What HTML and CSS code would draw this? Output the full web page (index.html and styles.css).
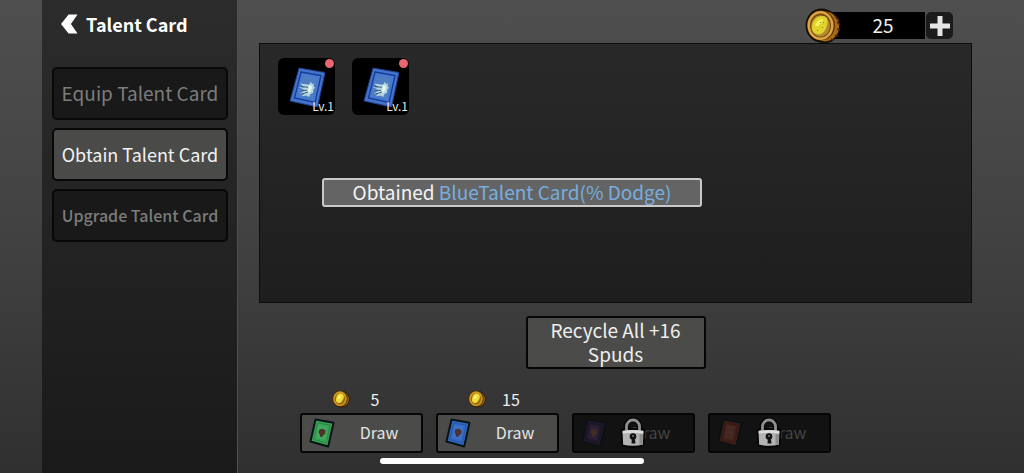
FILE: index.html
```html
<!DOCTYPE html>
<html lang="en">
<head>
<meta charset="utf-8">
<title>Talent Card</title>
<link rel="stylesheet" href="styles.css">
</head>
<body>
<svg class="defs" aria-hidden="true">
  <defs>
    <symbol id="coin" viewBox="0 0 36 36">
      <ellipse cx="20" cy="18.500" rx="15.500" ry="16.500" fill="#160d02"/>
      <ellipse cx="16.500" cy="17.500" rx="16" ry="17" fill="#160d02"/>
      <ellipse cx="20" cy="18.500" rx="14" ry="15" fill="#a86a16"/>
      <path d="M30 8l4 5M32 14l3 3M32 21l3 1M30 27l3 1M26 31l3 1" stroke="#4f2c06" stroke-width="1.500"/>
      <ellipse cx="16" cy="17.500" rx="14" ry="15" fill="#5b3307"/>
      <ellipse cx="15.500" cy="17.500" rx="13" ry="14.500" fill="#dda445"/>
      <ellipse cx="15.500" cy="17.500" rx="10.500" ry="12" fill="#76480c"/>
      <ellipse cx="15.500" cy="18" rx="9.500" ry="10.700" fill="#b08a34"/>
      <path d="M7 20c0-5 2-9 6-11 4-2 9-1 9.500 3 .5 5-2 12-6.500 14-4 1.500-9-1-9-6z" fill="#e0d42c"/>
      <path d="M10 18c1-4 4-7 8-7-1 4-4 8-8 7z" fill="#fbf05a"/>
      <path d="M12 22l1 1M17 19l1 1M15 14l1 1M18 14l1 1" stroke="#a2850f" stroke-width="1"/>
    </symbol>
    <symbol id="coin-small" viewBox="0 0 18 18">
      <ellipse cx="10" cy="9.300" rx="7.800" ry="8.300" fill="#2a1803"/>
      <ellipse cx="10.200" cy="9.300" rx="6.800" ry="7.300" fill="#94630f"/>
      <ellipse cx="8" cy="8.700" rx="7.600" ry="8.200" fill="#422806"/>
      <ellipse cx="8" cy="8.700" rx="6.800" ry="7.400" fill="#cf9a25"/>
      <ellipse cx="8" cy="8.800" rx="5.200" ry="5.800" fill="#9a6a10"/>
      <path d="M4 10c0-3 1-6 4-6.500 3-.4 4.500 2 3.500 5S8.500 13.500 6.500 13 4 11.500 4 10z" fill="#f0d83a"/>
      <path d="M5.500 9c.4-2 1.500-3.500 3.500-3.800C9.500 7 8 9.500 5.500 9z" fill="#fff47c"/>
    </symbol>
    <symbol id="card" viewBox="0 0 26 30">
      <path d="M6.500 1.500l18 3.200L19.200 28.500 1.500 23.500z" fill="currentColor" stroke="#0a1216" stroke-width="2" stroke-linejoin="round"/>
      <path d="M8.500 4.800l12.700 2.300L17.400 25 4.600 21.500z" fill="none" stroke="#000" stroke-opacity=".2" stroke-width="1"/>
      <path d="M9.500 7l9 1.600-2.800 13.600-8.500-2.200z" fill="#fff" fill-opacity=".06"/>
      <path d="M10.500 11.500l3-.8 3 1.800-.5 3.500-1.800 1-1 2-2.200-.6-.2-2.200-1.200-2z" fill="#4a302c"/>
      <path d="M12 13l2.500.4-.5 2.400-2.300-.5z" fill="#68302c"/>
    </symbol>
    <symbol id="talent" viewBox="0 0 36 42">
      <path d="M10 2l26 4.500L28.500 41 1 35z" fill="#4373cc" stroke="#203f86" stroke-width="1" stroke-linejoin="round"/>
      <path d="M12 6l20 3.500L26 36.500 5.500 32z" fill="#4679d2" stroke="#143c92" stroke-width="1.300"/>
      <path d="M14 9.500l14.500 2.300-4.800 21L8.500 29.500z" fill="#4f7dc2"/>
      <path d="M11 17.500l9 1.200 2-3 1 2.500 2-1-.5 3 1.500 1.500-1.800 2-.2 3-2.500 1.200-1.500 3-2.500-1.500-5 .8 3-2.600-5-.4 4.500-1.800-5.500-1.200 6-.6-6-2.400 6 .2z" fill="#b4d8de"/>
      <path d="M12 20.500l7 .8M11 24.800l7-.6M13 28l6-2" stroke="#314f78" stroke-width=".9"/>
      <path d="M20 19l3 1-1 5-3 2z" fill="#e6f7ec"/>
    </symbol>
    <symbol id="lock" viewBox="0 0 26 32">
      <path d="M6.500 15V9.500a6.500 6.500 0 0 1 13 0V15" fill="none" stroke="#080808" stroke-width="6"/>
      <path d="M1.500 13q11.500-2 23 0l-.7 15.500q-10.800 2.500-21.600 0z" fill="#b4b4b4" stroke="#080808" stroke-width="2"/>
      <path d="M6.500 14V9.500a6.500 6.500 0 0 1 13 0V14" fill="none" stroke="#8f8f8f" stroke-width="2.800"/>
      <path d="M2.700 14q10.300-1.800 20.600 0v2.500q-10.300-1.500-20.600 0z" fill="#dcdcdc"/>
      <path d="M19.500 17l3.500.3-.5 10-3 .6z" fill="#8c8c8c"/>
      <circle cx="13" cy="19.500" r="3.300" fill="#111"/>
      <path d="M12 20h2.500l1 6.500h-4z" fill="#111"/>
      <circle cx="13" cy="19" r="1" fill="#777"/>
    </symbol>
  </defs>
</svg>

<aside class="sidebar">
  <header class="heading">
    <button class="back" type="button" aria-label="Back">
      <svg viewBox="0 0 18 20"><path d="M8 0h9.500L10.500 10l7 10H8L0 10z" fill="#fff"/></svg>
    </button>
    <h1 class="title">Talent Card</h1>
  </header>
  <nav class="tabs">
    <button class="tab tab-large" type="button">Equip Talent Card</button>
    <button class="tab tab-active" type="button" aria-current="page">Obtain Talent Card</button>
    <button class="tab" type="button">Upgrade Talent Card</button>
  </nav>
</aside>

<main class="content">
  <div class="wallet">
    <svg class="wallet-coin"><use href="#coin"/></svg>
    <span class="balance">25</span>
    <button class="add" type="button" aria-label="Add coins">
      <svg viewBox="0 0 20 20"><path d="M7.500 0h5v7.500H20v5h-7.500V20h-5v-7.500H0v-5h7.500z" fill="#e4e4e4"/></svg>
    </button>
  </div>

  <section class="inventory" aria-label="Cards">
    <button class="slot" type="button">
      <svg class="slot-card"><use href="#talent"/></svg>
      <span class="dot"></span>
      <span class="level">Lv.1</span>
    </button>
    <button class="slot" type="button">
      <svg class="slot-card"><use href="#talent"/></svg>
      <span class="dot"></span>
      <span class="level">Lv.1</span>
    </button>
  </section>

  <button class="recycle" type="button">Recycle All +16 Spuds</button>

  <section class="draws" aria-label="Draw">
    <div class="draw-item">
      <div class="cost"><svg class="cost-coin"><use href="#coin-small"/></svg><span class="price">5</span></div>
      <button class="draw green" type="button"><svg class="draw-card"><use href="#card"/></svg><span class="draw-label">Draw</span></button>
    </div>
    <div class="draw-item">
      <div class="cost"><svg class="cost-coin"><use href="#coin-small"/></svg><span class="price">15</span></div>
      <button class="draw blue" type="button"><svg class="draw-card"><use href="#card"/></svg><span class="draw-label">Draw</span></button>
    </div>
    <div class="draw-item">
      <button class="draw locked purple" type="button" disabled><svg class="draw-card"><use href="#card"/></svg><span class="draw-label">Draw</span><svg class="lock"><use href="#lock"/></svg></button>
    </div>
    <div class="draw-item">
      <button class="draw locked red" type="button" disabled><svg class="draw-card"><use href="#card"/></svg><span class="draw-label">Draw</span><svg class="lock"><use href="#lock"/></svg></button>
    </div>
  </section>
</main>

<div class="toast" role="status">Obtained <span class="toast-name">BlueTalent Card(% Dodge)</span></div>
<div class="home-bar"></div>
</body>
</html>
```
FILE: styles.css
```css
* {
  box-sizing: border-box;
}

body {
  position: relative;
  display: flex;
  min-height: 100vh;
  margin: 0;
  padding: 0 52px 0 42px;
  background: linear-gradient(#4f4f4f, #434343 45%, #303030);
  color: #eee;
  font-family: "Noto Sans CJK SC", "Noto Sans", sans-serif;
  font-weight: 400;
}

button {
  margin: 0;
  padding: 0;
  border: 0;
  background: none;
  color: inherit;
  font: inherit;
}

svg {
  display: block;
}

.defs {
  position: absolute;
  width: 0;
  height: 0;
}

.sidebar {
  flex: 0 0 196px;
  padding: 10px 9px 0 10px;
  border-right: 1px solid #505050;
  background: linear-gradient(#2c2c2c, #1a1a1a);
}

.heading {
  display: flex;
  align-items: center;
  gap: 8px;
  height: 28px;
  margin-bottom: 29px;
  padding-left: 9px;
}

.back svg {
  width: 17px;
  height: 20px;
}

.title {
  margin: 0;
  color: #fff;
  font-size: 18px;
  font-weight: 700;
  line-height: 26px;
}

.tabs {
  display: flex;
  flex-direction: column;
  gap: 8px;
}

.tab {
  height: 53px;
  padding-bottom: 2px;
  border: 2px solid #080808;
  border-radius: 5px;
  background: #191919;
  color: #7c7c7c;
  font-size: 16px;
  font-weight: 500;
  white-space: nowrap;
}

.tab-large {
  font-size: 19px;
  font-weight: 400;
}

.tab-active {
  background: #4a4a48;
  color: #f2f2f2;
  font-size: 18px;
  font-weight: 400;
}

.content {
  display: flex;
  flex: 1;
  flex-direction: column;
  padding: 8px 0 20px 21px;
}

.wallet {
  display: flex;
  align-items: center;
  align-self: flex-end;
  height: 35px;
  margin-right: 19px;
}

.wallet-coin {
  z-index: 1;
  width: 36px;
  height: 36px;
  margin-right: -12px;
}

.balance {
  width: 96px;
  height: 27px;
  padding-left: 12px;
  background: #000;
  font-size: 19px;
  line-height: 26px;
  text-align: center;
}

.add {
  display: grid;
  place-items: center;
  width: 27px;
  height: 27px;
  margin-left: 1px;
  border-radius: 5px;
  background: #1b1b1b;
}

.add svg {
  width: 20px;
  height: 20px;
}

.inventory {
  display: flex;
  align-items: flex-start;
  gap: 17px;
  height: 260px;
  padding: 14px 18px;
  border: 1px solid #0d0d0d;
  background: linear-gradient(#292929, #1e1e1e);
}

.slot {
  position: relative;
  display: grid;
  place-items: center;
  width: 57px;
  height: 57px;
  border-radius: 6px;
  background: #000;
}

.slot-card {
  width: 36px;
  height: 42px;
}

.dot {
  position: absolute;
  top: 1px;
  right: 1px;
  width: 9px;
  height: 9px;
  border-radius: 50%;
  background: #e76670;
}

.level {
  position: absolute;
  right: 1px;
  bottom: 0;
  color: #e6e6e6;
  font-size: 12px;
  line-height: 18px;
}

.recycle {
  align-self: center;
  width: 180px;
  height: 53px;
  margin: 13px 0 20px;
  padding: 0 20px 2px;
  border: 2px solid #060606;
  border-radius: 3px;
  background: #4b4b49;
  font-size: 19px;
  line-height: 24px;
}

.draws {
  display: flex;
  align-items: flex-end;
  gap: 13px;
  padding-left: 41px;
}

.draw-item {
  width: 123px;
}

.cost {
  display: flex;
  align-items: center;
  height: 20px;
  margin-bottom: 4px;
  padding-left: 32px;
}

.cost-coin {
  width: 18px;
  height: 18px;
}

.price {
  width: 50px;
  font-size: 16px;
  line-height: 18px;
  text-align: center;
}

.draw {
  position: relative;
  display: flex;
  align-items: center;
  width: 100%;
  height: 40px;
  padding-left: 7px;
  border: 2px solid #060606;
  border-radius: 3px;
  background: #4b4b49;
  font-size: 16px;
}

.draw-card {
  width: 26px;
  height: 30px;
}

.draw-label {
  flex: 1;
  padding: 0 0 2px 2px;
  text-align: center;
}

.green {
  color: #37a455;
}

.blue {
  color: #3269c4;
}

.purple {
  color: #251a31;
}

.red {
  color: #4b2119;
}

.draw .draw-label {
  color: #e4e4e4;
}

.locked {
  background: #121212;
}

.draw.locked .draw-label {
  color: #444;
}

.locked .draw-card {
  opacity: 0.8;
}

.lock {
  position: absolute;
  top: 2px;
  left: 46px;
  width: 26px;
  height: 32px;
}

.toast {
  position: absolute;
  top: 178px;
  left: 50%;
  width: 380px;
  height: 29px;
  border: 2px solid #c9c9c9;
  border-radius: 3px;
  background: #646464;
  color: #f4f4f4;
  font-size: 19px;
  line-height: 24px;
  text-align: center;
  transform: translateX(-50%);
}

.toast-name {
  color: #78aede;
}

.home-bar {
  position: absolute;
  bottom: 9px;
  left: 50%;
  width: 264px;
  height: 6px;
  border-radius: 3px;
  background: #fff;
  transform: translateX(-50%);
}
```
